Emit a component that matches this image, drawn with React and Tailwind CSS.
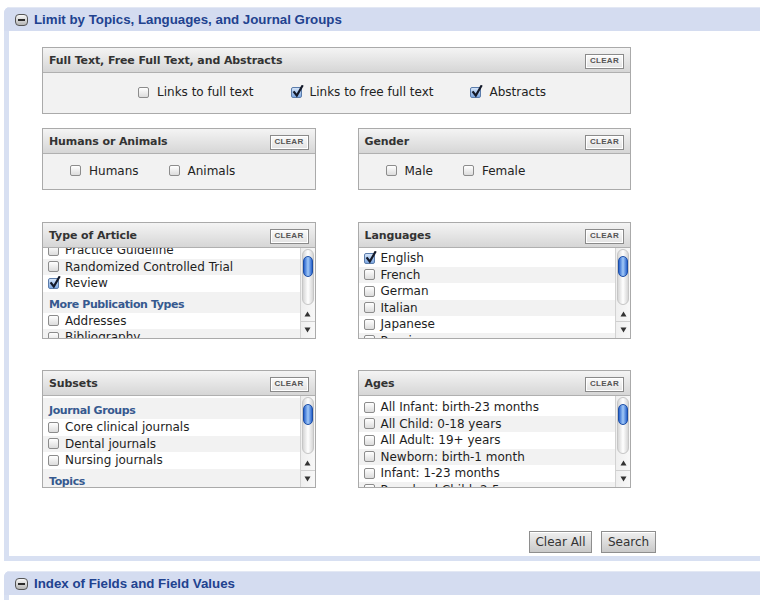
import React from "react";

const FONT = { fontFamily: '"DejaVu Sans", Verdana, sans-serif' };
const HFONT = { fontFamily: '"Liberation Sans", Arial, sans-serif' };

function Minus() {
  return (
    <span className="w-[13px] h-[12px] shrink-0 rounded-[4px] border border-[#555555] bg-gradient-to-b from-[#f8f8f8] to-[#b5b5b5] flex items-center justify-center">
      <span className="w-[7px] h-[2px] bg-[#2a2a2a]" />
    </span>
  );
}

function Cb({ checked }) {
  if (checked) {
    return (
      <span className="relative inline-block w-[11px] h-[11px] shrink-0 rounded-[2px] border border-[#5b7cab] bg-gradient-to-b from-[#d4e4f8] to-[#7ea8e2]">
        <svg className="absolute left-[0px] top-[-3px]" width="12" height="13" viewBox="0 0 12 13">
          <path d="M2.2 7.2 L4.8 10.6 L10.2 1.2" stroke="#141a2a" strokeWidth="2.2" fill="none" strokeLinecap="square" />
        </svg>
      </span>
    );
  }
  return (
    <span className="inline-block w-[11px] h-[11px] shrink-0 rounded-[2px] border border-[#8c8c8c] bg-gradient-to-b from-white to-[#dcdcdc]" />
  );
}

function ClearBtn() {
  return (
    <span
      style={HFONT}
      className="h-[15px] w-[39px] flex items-center justify-center border border-[#8a8a8a] bg-gradient-to-b from-[#fbfbfb] to-[#e2e2e2] text-[8px] font-bold tracking-[0.3px] text-[#555] shadow-[inset_0_0_0_1px_#ffffff]"
    >
      CLEAR
    </span>
  );
}

function Box({ title, children, className }) {
  return (
    <div className={"border border-[#aaaaaa] bg-[#f2f2f2] " + (className || "")}>
      <div className="h-[25px] flex items-center justify-between pl-[6px] pr-[6px] pt-[2px] bg-gradient-to-b from-[#f4f4f4] to-[#d6d6d6] border-b border-[#b0b0b0]">
        <span className="text-[11px] font-bold text-[#333333] tracking-[-0.1px]">{title}</span>
        <ClearBtn />
      </div>
      {children}
    </div>
  );
}

function Item({ label, checked }) {
  return (
    <span className="flex items-center gap-[8px] text-[12px] text-[#222222] whitespace-nowrap">
      <Cb checked={checked} />
      {label}
    </span>
  );
}

function Row({ label, checked, gray }) {
  return (
    <div className={"h-[16.5px] flex items-center gap-[6px] pl-[5px] text-[12px] text-[#1e1e1e] whitespace-nowrap " + (gray ? "bg-[#f2f2f2]" : "bg-white")}>
      <Cb checked={checked} />
      <span>{label}</span>
    </div>
  );
}

function Heading({ label, gray }) {
  return (
    <div className={"h-[21px] pt-[5px] pl-[6px] text-[11px] font-bold tracking-[-0.4px] text-[#36598f] whitespace-nowrap " + (gray ? "bg-[#f2f2f2]" : "bg-white")}>
      {label}
    </div>
  );
}

function Scroll() {
  return (
    <div className="w-[15px] shrink-0 flex flex-col bg-gradient-to-r from-[#efefef] to-[#f8f8f8] border-l border-[#d2d2d2]">
      <div className="flex-1 pt-[1px] px-[1px] pb-[1px]">
        <div className="h-full rounded-full bg-gradient-to-r from-[#d6d6d6] via-white to-[#d6d6d6] border border-[#c6c6c6] pt-[6px] flex justify-center">
          <div className="w-[10px] h-[21px] rounded-full border border-[#1c4ea6] bg-gradient-to-r from-[#2a63cc] via-[#a2c9f7] to-[#2a63cc]" />
        </div>
      </div>
      <div className="h-[16px] flex items-center justify-center border-b border-[#cfcfcf]">
        <svg width="7" height="6" viewBox="0 0 7 6"><path d="M3.5 0.5 L6.5 5.5 L0.5 5.5 Z" fill="#333" /></svg>
      </div>
      <div className="h-[16px] flex items-center justify-center">
        <svg width="7" height="6" viewBox="0 0 7 6"><path d="M0.5 0.5 L6.5 0.5 L3.5 5.5 Z" fill="#333" /></svg>
      </div>
    </div>
  );
}

function ListBox({ title, height, children }) {
  return (
    <Box title={title}>
      <div className="flex bg-white" style={{ height }}>
        <div className="flex-1 overflow-hidden">{children}</div>
        <Scroll />
      </div>
    </Box>
  );
}

function SectionHeader({ title }) {
  return (
    <div className="h-[24px] flex items-center gap-[6px] pl-[11px] bg-[#d4dcf0] border-t border-[#e3e8f4]">
      <Minus />
      <span style={HFONT} className="text-[13.3px] font-bold text-[#21428f]">{title}</span>
    </div>
  );
}

function Btn({ label, w }) {
  return (
    <span
      className={"h-[22px] flex items-center justify-center border border-[#8e8e8e] bg-gradient-to-b from-[#f0f0f0] to-[#c9c9c9] text-[12px] text-[#333] shadow-[inset_0_1px_0_#ffffff] " + w}
    >
      {label}
    </span>
  );
}

export default function App() {
  return (
    <div style={FONT} className="w-[760px] h-[600px] overflow-hidden bg-white">
      <div className="pt-[7px] pl-[4px]">
        <section className="rounded-tl-[6px] overflow-hidden bg-[#d8e0f2]">
          <SectionHeader title="Limit by Topics, Languages, and Journal Groups" />
          <div className="ml-[5px] mb-[5px] bg-white pl-[33px] pt-[16px] pb-[3px]">
            <div className="w-[614px] flex flex-col">
              <Box title="Full Text, Free Full Text, and Abstracts" className="w-[589px]">
                <div className="h-[40px] flex items-center pl-[95px] gap-[37px] pb-[2px]">
                  <Item label="Links to full text" />
                  <Item label="Links to free full text" checked />
                  <Item label="Abstracts" checked />
                </div>
              </Box>

              <div className="w-[589px] grid grid-cols-2 gap-x-[42px] mt-[14px]">
                <Box title="Humans or Animals">
                  <div className="h-[35px] flex items-center pl-[27px] gap-[30px] pb-[2px]">
                    <Item label="Humans" />
                    <Item label="Animals" />
                  </div>
                </Box>
                <Box title="Gender">
                  <div className="h-[35px] flex items-center pl-[27px] gap-[30px] pb-[2px]">
                    <Item label="Male" />
                    <Item label="Female" />
                  </div>
                </Box>
              </div>

              <div className="w-[589px] grid grid-cols-2 gap-x-[42px] mt-[32px]">
                <ListBox title="Type of Article" height={90}>
                  <div className="-mt-[6px]">
                    <Row label="Practice Guideline" />
                    <Row label="Randomized Controlled Trial" gray />
                    <Row label="Review" checked />
                    <Heading label="More Publication Types" gray />
                    <Row label="Addresses" />
                    <Row label="Bibliography" gray />
                  </div>
                </ListBox>
                <ListBox title="Languages" height={90}>
                  <div className="pt-[2px]">
                    <Row label="English" checked />
                    <Row label="French" gray />
                    <Row label="German" />
                    <Row label="Italian" gray />
                    <Row label="Japanese" />
                    <Row label="Russian" gray />
                  </div>
                </ListBox>
              </div>

              <div className="w-[589px] grid grid-cols-2 gap-x-[42px] mt-[31px]">
                <ListBox title="Subsets" height={91}>
                  <div className="pt-[2px]">
                    <Heading label="Journal Groups" gray />
                    <Row label="Core clinical journals" />
                    <Row label="Dental journals" gray />
                    <Row label="Nursing journals" />
                    <Heading label="Topics" gray />
                  </div>
                </ListBox>
                <ListBox title="Ages" height={91}>
                  <div className="pt-[3px]">
                    <Row label="All Infant: birth-23 months" />
                    <Row label="All Child: 0-18 years" gray />
                    <Row label="All Adult: 19+ years" />
                    <Row label="Newborn: birth-1 month" gray />
                    <Row label="Infant: 1-23 months" />
                    <Row label="Preschool Child: 2-5 years" gray />
                  </div>
                </ListBox>
              </div>

              <div className="mt-[43px] flex justify-end gap-[9px]">
                <Btn label="Clear All" w="w-[63px]" />
                <Btn label="Search" w="w-[55px]" />
              </div>
            </div>
          </div>
        </section>

        <section className="mt-[10px] rounded-tl-[6px] overflow-hidden bg-[#d8e0f2]">
          <SectionHeader title="Index of Fields and Field Values" />
          <div className="ml-[5px] h-[40px] bg-white" />
        </section>
      </div>
    </div>
  );
}
